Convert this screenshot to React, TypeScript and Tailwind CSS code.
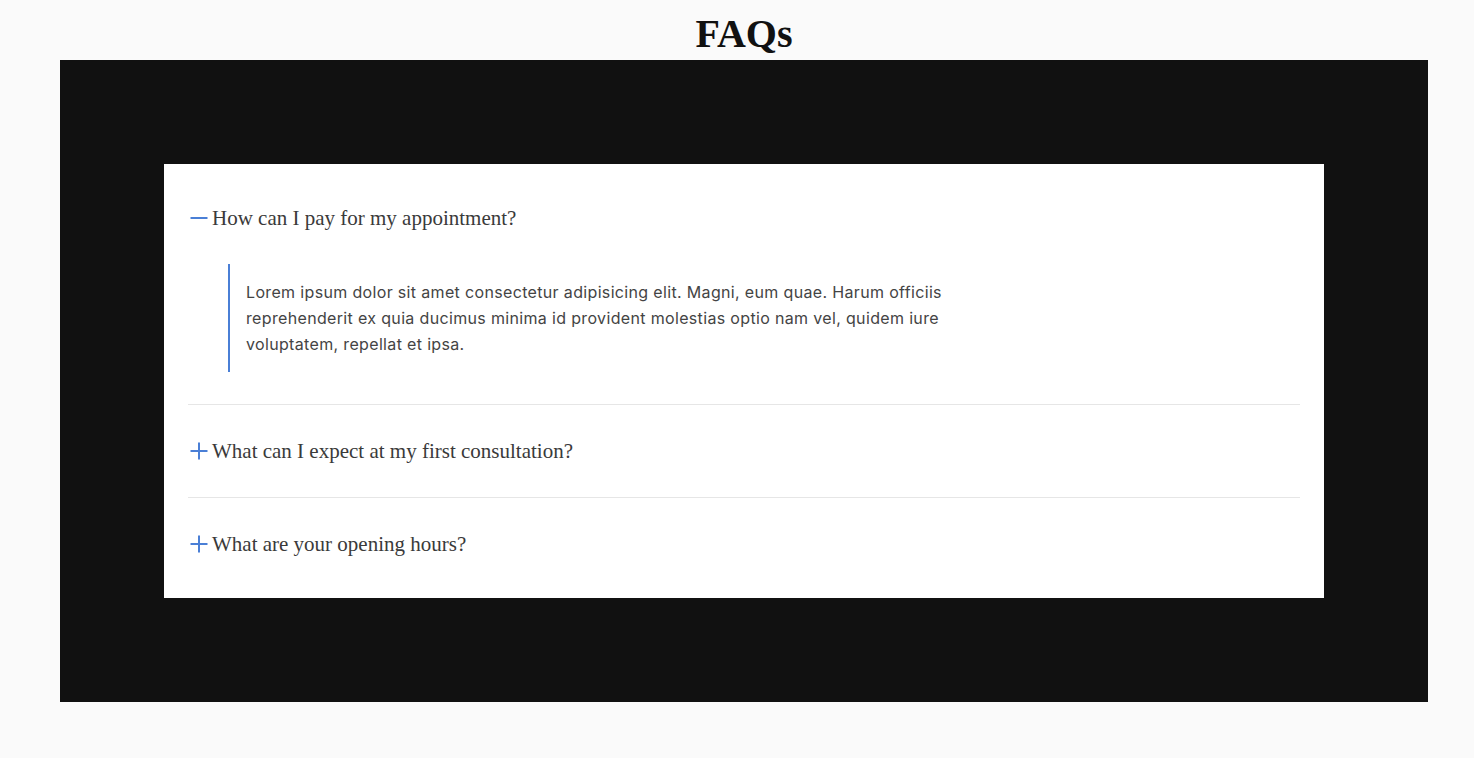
import React, { useState } from "react";

const items = [
  {
    q: "How can I pay for my appointment?",
    a: "Lorem ipsum dolor sit amet consectetur adipisicing elit. Magni, eum quae. Harum officiis reprehenderit ex quia ducimus minima id provident molestias optio nam vel, quidem iure voluptatem, repellat et ipsa.",
  },
  {
    q: "What can I expect at my first consultation?",
    a: "Lorem ipsum dolor sit amet consectetur adipisicing elit. Magni, eum quae. Harum officiis reprehenderit ex quia ducimus minima id provident molestias optio nam vel, quidem iure voluptatem, repellat et ipsa.",
  },
  {
    q: "What are your opening hours?",
    a: "Lorem ipsum dolor sit amet consectetur adipisicing elit. Magni, eum quae. Harum officiis reprehenderit ex quia ducimus minima id provident molestias optio nam vel, quidem iure voluptatem, repellat et ipsa.",
  },
];

function Icon({ open }: { open: boolean }) {
  return (
    <svg width="20" height="20" viewBox="0 0 20 20" className="shrink-0">
      <line x1="2.5" y1="10" x2="19.5" y2="10" stroke="#4a7fd6" strokeWidth="2" />
      {!open && <line x1="11" y1="1.5" x2="11" y2="18.5" stroke="#4a7fd6" strokeWidth="2" />}
    </svg>
  );
}

export default function App() {
  const [open, setOpen] = useState<number>(0);
  return (
    <div className="min-h-[758px] bg-[#fafafa]">
      <h1
        className="h-[60px] pt-[14px] pl-[14px] text-center text-[40px] leading-[40px] font-bold text-[#111]"
        style={{ fontFamily: '"Liberation Serif", "Times New Roman", serif' }}
      >
        FAQs
      </h1>
      <div className="ml-[60px] mr-[46px] bg-[#111111] p-[104px]">
        <div className="bg-white px-6 pt-2 pb-2">
          {items.map((it, i) => (
            <div key={i} className={i < items.length - 1 ? "border-b border-[#e6e6e6]" : ""}>
              <button
                type="button"
                onClick={() => setOpen(open === i ? -1 : i)}
                className="flex w-full items-center gap-1 py-8 text-left"
              >
                <Icon open={open === i} />
                <span
                  className="text-[21px] leading-[28px] text-[#3a3a3a]"
                  style={{ fontFamily: '"Liberation Serif", "Times New Roman", serif' }}
                >
                  {it.q}
                </span>
              </button>
              {open === i && (
                <div className="pb-8">
                  <div className="ml-10 border-l-2 border-[#4a7fd6] py-[15px] pl-4">
                    <p
                      className="max-w-[740px] text-[16px] leading-[26px] tracking-[0.34px] text-[#444444]"
                      style={{ fontFamily: 'Inter, "Liberation Sans", sans-serif' }}
                    >
                      {it.a}
                    </p>
                  </div>
                </div>
              )}
            </div>
          ))}
        </div>
      </div>
    </div>
  );
}
